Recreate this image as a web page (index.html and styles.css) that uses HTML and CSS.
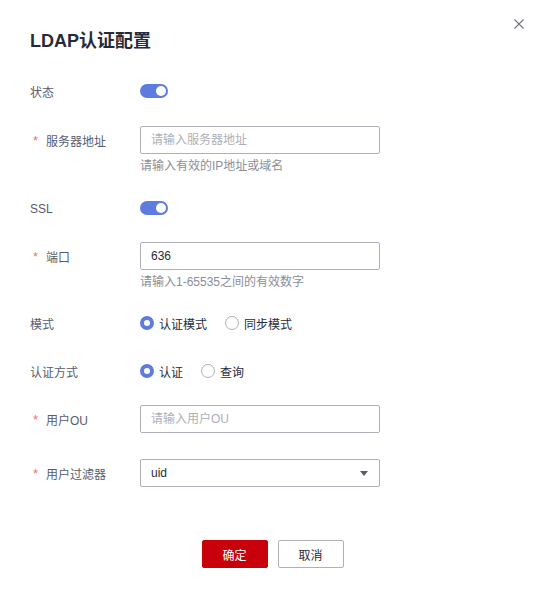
FILE: index.html
```html
<!DOCTYPE html>
<html lang="zh-CN">
<head>
  <meta charset="UTF-8">
  <meta name="viewport" content="width=device-width, initial-scale=1.0">
  <title>LDAP认证配置</title>
  <link rel="stylesheet" href="styles.css">
</head>
<body>
  <div class="modal">
    <button class="modal-close" type="button" aria-label="关闭">
      <svg width="10" height="10" viewBox="0 0 10 10">
        <path d="M0.5 0.5 L9.5 9.5 M9.5 0.5 L0.5 9.5" stroke="#71757f" stroke-width="1.1" fill="none"/>
      </svg>
    </button>

    <h1 class="modal-title">LDAP认证配置</h1>

    <form class="form" id="ldap-form">
      <div class="form-item form-item-first">
        <label class="form-label">状态</label>
        <div class="form-control">
          <span class="switch is-on"></span>
        </div>
      </div>

      <div class="form-item has-hint">
        <label class="form-label required" for="server">服务器地址</label>
        <div class="form-control">
          <input class="input" type="text" id="server" placeholder="请输入服务器地址">
          <div class="form-hint">请输入有效的IP地址或域名</div>
        </div>
      </div>

      <div class="form-item">
        <label class="form-label">SSL</label>
        <div class="form-control">
          <span class="switch is-on"></span>
        </div>
      </div>

      <div class="form-item has-hint form-item-tight">
        <label class="form-label required" for="port">端口</label>
        <div class="form-control">
          <input class="input" type="text" id="port" value="636">
          <div class="form-hint">请输入1-65535之间的有效数字</div>
        </div>
      </div>

      <div class="form-item">
        <label class="form-label">模式</label>
        <div class="form-control radio-group">
          <label class="radio is-checked"><span class="radio-dot"></span>认证模式</label>
          <label class="radio"><span class="radio-dot"></span>同步模式</label>
        </div>
      </div>

      <div class="form-item">
        <label class="form-label">认证方式</label>
        <div class="form-control radio-group">
          <label class="radio is-checked"><span class="radio-dot"></span>认证</label>
          <label class="radio"><span class="radio-dot"></span>查询</label>
        </div>
      </div>

      <div class="form-item form-item-wide">
        <label class="form-label required" for="ou">用户OU</label>
        <div class="form-control">
          <input class="input" type="text" id="ou" placeholder="请输入用户OU">
        </div>
      </div>

      <div class="form-item">
        <label class="form-label required">用户过滤器</label>
        <div class="form-control">
          <div class="select">
            <span>uid</span>
            <span class="select-arrow"></span>
          </div>
        </div>
      </div>

      <div class="modal-footer">
        <button class="btn btn-primary" type="submit">确定</button>
        <button class="btn btn-default" type="button">取消</button>
      </div>
    </form>
  </div>
</body>
</html>
```

FILE: styles.css
```css
/* Base */
body {
  margin: 0;
  background-color: #fff;
  color: #252b3a;
  font-family: "Liberation Sans", "Noto Sans CJK SC", sans-serif;
  font-size: 12px;
}

/* Dialog */
.modal {
  position: relative;
  width: 545px;
  height: 600px;
  box-sizing: border-box;
  padding: 29px 30px 0;
}

.modal-close {
  position: absolute;
  top: 18px;
  right: 20px;
  width: 12px;
  height: 12px;
  padding: 1px;
  border: none;
  background: transparent;
  cursor: pointer;
  display: flex;
}

.modal-title {
  margin: 0;
  height: 24px;
  font-size: 18px;
  line-height: 24px;
  font-weight: bold;
  color: #252b3a;
}

/* Form */
.form {
  margin-top: 24px;
}

.form-item {
  display: flex;
  align-items: flex-start;
  height: 28px;
  margin-bottom: 20px;
}

.form-item.has-hint {
  height: 48px;
}

.form-item-first {
  margin-bottom: 21px;
}

.form-item-tight {
  margin-bottom: 19px;
}

.form-item-wide {
  margin-bottom: 26px;
}

.form-label {
  position: relative;
  width: 110px;
  height: 28px;
  flex-shrink: 0;
  display: flex;
  align-items: center;
  padding-top: 1px;
  box-sizing: border-box;
  color: #575d6c;
}

.form-label.required {
  padding-left: 16px;
}

.form-label.required::before {
  content: "*";
  position: absolute;
  left: 3px;
  top: 8px;
  line-height: 14px;
  color: #f66f6a;
  font-size: 13px;
}

.form-control {
  width: 240px;
  height: 28px;
  display: flex;
  flex-direction: column;
  justify-content: center;
}

.has-hint .form-control {
  height: 48px;
  justify-content: flex-start;
}

.form-hint {
  height: 20px;
  padding-top: 3px;
  line-height: 18px;
  overflow: hidden;
  color: #8a8e99;
}

/* Input */
.input {
  flex-shrink: 0;
  width: 240px;
  height: 28px;
  box-sizing: border-box;
  padding: 0 10px;
  border: 1px solid #adb0b8;
  border-radius: 2px;
  font-family: inherit;
  font-size: 12px;
  color: #252b3a;
  outline: none;
}

.input::placeholder {
  color: #adb0b8;
}

/* Switch */
.switch {
  position: relative;
  display: block;
  width: 28px;
  height: 14px;
  border-radius: 7px;
  background-color: #adb0b8;
}

.switch.is-on {
  background-color: #5e7ce0;
}

.switch::after {
  content: "";
  position: absolute;
  top: 2px;
  left: 2px;
  width: 10px;
  height: 10px;
  border-radius: 50%;
  background-color: #fff;
}

.switch.is-on::after {
  left: 16px;
}

/* Radio */
.radio-group {
  flex-direction: row;
  align-items: center;
  justify-content: flex-start;
  gap: 18px;
}

.radio {
  display: flex;
  align-items: center;
  height: 16px;
  color: #252b3a;
  cursor: pointer;
}

.radio-dot {
  width: 14px;
  height: 14px;
  box-sizing: border-box;
  border: 1px solid #adb0b8;
  border-radius: 50%;
  margin-right: 5px;
}

.radio.is-checked .radio-dot {
  border: 4px solid #5e7ce0;
}

/* Select */
.select {
  width: 240px;
  height: 28px;
  box-sizing: border-box;
  padding: 0 10px;
  border: 1px solid #adb0b8;
  border-radius: 2px;
  display: flex;
  align-items: center;
  justify-content: space-between;
  color: #252b3a;
}

.select-arrow {
  width: 0;
  height: 0;
  margin-right: 1px;
  border-left: 4px solid transparent;
  border-right: 4px solid transparent;
  border-top: 5px solid #575d6c;
}

/* Footer */
.modal-footer {
  display: flex;
  justify-content: center;
  gap: 10px;
  margin-top: 53px;
  margin-left: -30px;
  margin-right: -30px;
}

.btn {
  width: 66px;
  height: 28px;
  border-radius: 2px;
  font-family: inherit;
  font-size: 12px;
  cursor: pointer;
}

.btn-primary {
  background-color: #c7000b;
  border: 1px solid #c7000b;
  color: #fff;
}

.btn-default {
  background-color: #fff;
  border: 1px solid #adb0b8;
  color: #252b3a;
}
```
